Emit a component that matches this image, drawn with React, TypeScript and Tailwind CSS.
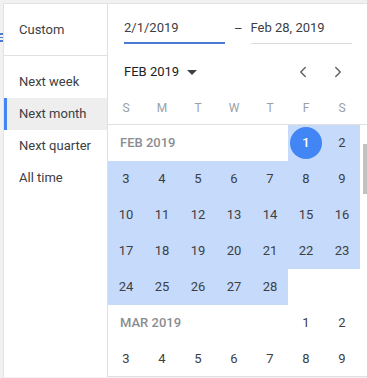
import { ChevronLeft, ChevronRight } from "lucide-react";

const presets = ["Next week", "Next month", "Next quarter", "All time"];
const weekdays = ["S", "M", "T", "W", "T", "F", "S"];

type Cell = { d?: number; sel?: boolean; start?: boolean };

const febRows: Cell[][] = [
  [{}, {}, {}, {}, {}, { d: 1, sel: true, start: true }, { d: 2, sel: true }],
  [3, 4, 5, 6, 7, 8, 9].map((d) => ({ d, sel: true })),
  [10, 11, 12, 13, 14, 15, 16].map((d) => ({ d, sel: true })),
  [17, 18, 19, 20, 21, 22, 23].map((d) => ({ d, sel: true })),
  [...[24, 25, 26, 27, 28].map((d) => ({ d, sel: true })), {}, {}],
];

const marRows: Cell[][] = [
  [{}, {}, {}, {}, {}, { d: 1 }, { d: 2 }],
  [3, 4, 5, 6, 7, 8, 9].map((d) => ({ d })),
];

function Row({ cells, label }: { cells: Cell[]; label?: string }) {
  return (
    <div className="relative grid h-[36px] grid-cols-[repeat(7,36px)]">
      {label && (
        <span className="absolute left-[12px] top-0 flex h-[36px] items-center text-[13px] font-medium text-[#8a8d91]">
          {label}
        </span>
      )}
      {cells.map((c, i) => (
        <div
          key={i}
          className={`flex h-[36px] items-center justify-center ${c.sel ? "bg-[#c6dafc]" : ""}`}
        >
          {c.start ? (
            <span className="flex h-[32px] w-[32px] items-center justify-center rounded-full bg-[#4285f4] text-[13px] font-medium text-white">
              {c.d}
            </span>
          ) : (
            <span className="text-[13px] text-[#3c4043]">{c.d}</span>
          )}
        </div>
      ))}
    </div>
  );
}

export default function App() {
  return (
    <div
      className="relative h-[378px] w-[367px] overflow-hidden bg-[#f1f1f1] pl-[3px] pt-[3px]"
      style={{ fontFamily: "Roboto, 'Liberation Sans', sans-serif" }}
    >
      {/* peeking menu icon of the page behind */}
      <div className="absolute left-0 top-[33px] flex w-[3px] flex-col gap-[2px]">
        <span className="h-[1.5px] bg-[#4a7bd0]" />
        <span className="h-[1.5px] bg-[#4a7bd0]" />
        <span className="h-[1.5px] bg-[#4a7bd0]" />
      </div>

      <div className="flex h-[374px] border-l border-t border-[#e2e2e2] bg-white">
        {/* Presets */}
        <div className="w-[104px] shrink-0 border-r border-[#e0e0e0]">
          <div className="flex h-[52px] items-center border-b border-[#e0e0e0] pl-[15px] text-[13px] text-[#3c4043]">
            Custom
          </div>
          <div className="pt-[10px]">
            {presets.map((p) => (
              <div
                key={p}
                className={`flex h-[32px] items-center text-[13px] text-[#3c4043] ${
                  p === "Next month" ? "border-l-[3px] border-[#4285f4] bg-[#eeeeee] pl-[12px]" : "pl-[15px]"
                }`}
              >
                {p}
              </div>
            ))}
          </div>
        </div>

        {/* Calendar */}
        <div className="relative flex-1">
          <div className="flex h-[52px] items-start pl-[16px] pt-[14px]">
            <div className="w-[101px] border-b-2 border-[#4a7bd0] pb-[4px] text-[13px] text-[#3c4043]">
              2/1/2019
            </div>
            <span className="ml-[9px] mt-[1px] text-[13px] text-[#3c4043]">–</span>
            <div className="ml-[8px] w-[101px] border-b border-[#dadce0] pb-[5px] text-[13px] text-[#3c4043]">
              Feb 28, 2019
            </div>
          </div>

          <div className="flex h-[32px] items-center pl-[16px] pr-[12px]">
            <span className="text-[13px] text-[#202124]">FEB 2019</span>
            <svg width="10" height="5" viewBox="0 0 10 5" className="ml-[8px]">
              <path d="M0 0h10L5 5z" fill="#3c4043" />
            </svg>
            <div className="ml-auto flex items-center gap-[17px] pr-[8px]">
              <ChevronLeft size={18} strokeWidth={2} color="#5f6368" />
              <ChevronRight size={18} strokeWidth={2} color="#5f6368" />
            </div>
          </div>

          <div className="grid h-[37px] grid-cols-[repeat(7,36px)] items-center border-b border-[#e0e0e0] pt-[3px]">
            {weekdays.map((w, i) => (
              <span key={i} className="text-center text-[12px] text-[#9aa0a6]">
                {w}
              </span>
            ))}
          </div>

          {febRows.map((r, i) => (
            <Row key={i} cells={r} label={i === 0 ? "FEB 2019" : undefined} />
          ))}
          {marRows.map((r, i) => (
            <Row key={"m" + i} cells={r} label={i === 0 ? "MAR 2019" : undefined} />
          ))}

          <div className="absolute bottom-0 left-0 right-0 border-b border-[#e0e0e0]" />
          {/* scrollbar thumb */}
          <div className="absolute right-0 top-[140px] h-[50px] w-[4px] bg-[#c1c1c1]" />
        </div>
      </div>
    </div>
  );
}
